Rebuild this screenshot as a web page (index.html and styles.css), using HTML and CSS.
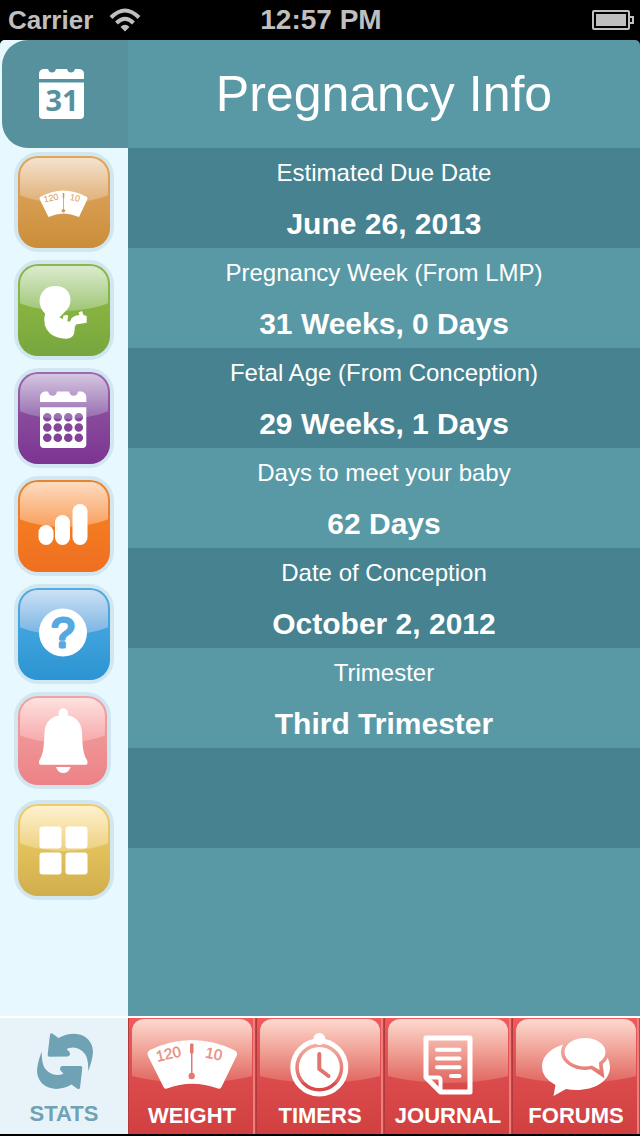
FILE: index.html
```html
<!DOCTYPE html>
<html lang="en">
<head>
  <meta charset="UTF-8">
  <meta name="viewport" content="width=device-width, initial-scale=1.0">
  <title>Pregnancy Info</title>
  <link rel="stylesheet" href="styles.css">
</head>
<body>
  <div class="status-bar">
    <div class="status-left">
      <span class="carrier">Carrier</span>
      <svg class="wifi" width="32" height="24" viewBox="0 0 32 24" fill="none" stroke="#bfbfbf" stroke-width="4">
        <path d="M2 9.500Q16 -4.500 30 9.500"/>
        <path d="M7.500 15Q16 6.500 24.500 15"/>
        <path d="M11.500 19Q16 14.500 20.500 19L16 23.500Z" fill="#bfbfbf" stroke="none"/>
      </svg>
    </div>
    <span class="clock">12:57 PM</span>
    <svg class="battery" width="42" height="20" viewBox="0 0 42 20" fill="none" stroke="#bfbfbf" stroke-width="2">
      <rect x="1" y="1" width="36" height="18" rx="1"/>
      <path d="M37 7h4v6h-4"/>
      <rect x="4" y="4" width="30" height="12" fill="#bfbfbf" stroke="none"/>
    </svg>
  </div>

  <div class="app">
    <!-- Side menu -->
    <nav class="sidebar">
      <button class="side-current" aria-label="Pregnancy info">
        <svg width="46" height="52" viewBox="0 0 46 52" fill="#fff">
          <path d="M4 1H9Q10 4.500 13 4.500T17 1H28Q29 4.500 32 4.500T36 1H41Q45 2 45 6V11H0V6Q0 2 4 1Z"/>
          <path d="M0 14.500H45V47Q45 51 41 51H4Q0 51 0 47Z"/>
          <text class="date-text" x="23" y="43" text-anchor="middle">31</text>
        </svg>
      </button>
      <button class="tile tile-weight" aria-label="Weight">
        <svg viewBox="0 0 92 92" fill="#fff">
          <path d="M22 41Q45.500 28 69 41Q70 42 69 44L61 61Q45.500 54 30.500 61L22 44Q21 42 22 41Z"/>
          <path d="M44.700 37h1.600v5h-.5v11a1.800 1.800 0 1 1-.8 0V42h-.3Z" fill="#d59a4e"/>
          <g class="dial-small" fill="#d59a4e" text-anchor="middle">
            <text x="33" y="45" transform="rotate(-12 33 42)">120</text>
            <text x="57" y="45" transform="rotate(10 57 42)">10</text>
          </g>
        </svg>
      </button>
      <button class="tile tile-baby" aria-label="Baby">
        <svg viewBox="0 0 92 92" fill="#fff">
          <path d="M37 22C47 22 52.500 28 52.500 36C52.500 44 48 46 44 51Q42 53 41.300 53.300L44.700 55L45.500 51.500L49 51Q51 52 49.700 54L49.500 57.500L52 57.500L53.700 54Q57 51 61.500 51L60.500 48.500L64 47L65.500 51L68.700 52V58.700L58 60.500Q56 63 56.500 67Q56 74 50 74.500Q40 75.500 32 69.500Q24 62 27 49.500Q21.500 44 21.500 37C22 28 28 22 37 22Z"/>
        </svg>
      </button>
      <button class="tile tile-calendar" aria-label="Calendar">
        <svg viewBox="0 0 92 92" fill="#fff">
          <mask id="days">
            <rect width="92" height="92" fill="#fff"/>
            <g stroke="#000" stroke-width="8.600" stroke-linecap="round" stroke-dasharray="0 10.500">
              <path d="M29.300 45.300H61.500"/>
              <path d="M29.300 55.500H61.500"/>
              <path d="M29.300 65.700H61.500"/>
            </g>
          </mask>
          <path d="M26 19.500H30Q31 23.700 34.700 23.700T39 19.500H51Q52 23.700 55.700 23.700T60 19.500H64Q68.300 21 68.300 25V30H22V25Q22 21 26 19.500Z"/>
          <path d="M22 35.300H68.300V72Q68.300 76 64.300 76H26Q22 76 22 72Z" mask="url(#days)"/>
        </svg>
      </button>
      <button class="tile tile-chart" aria-label="Charts">
        <svg viewBox="0 0 92 92" fill="#fff">
          <rect x="20.500" y="45" width="15" height="20" rx="7.500"/>
          <rect x="37" y="35" width="15" height="30" rx="7.500"/>
          <rect x="54.500" y="24" width="15" height="41" rx="7.500"/>
        </svg>
      </button>
      <button class="tile tile-help" aria-label="Help">
        <svg viewBox="0 0 92 92">
          <circle cx="45" cy="44.500" r="24" fill="#fff"/>
          <text class="help-text" x="45" y="59" text-anchor="middle">?</text>
        </svg>
      </button>
      <button class="tile tile-bell tile-narrow" aria-label="Reminders">
        <svg viewBox="0 0 92 92" fill="#fff">
          <circle cx="45.300" cy="17" r="4.700"/>
          <path d="M45.300 19C57 19 63.500 26 64 36C64.500 50 65 58 69 64Q70.500 68.700 68 68.700H22.500Q20 68.700 21.500 64C25.500 58 26 50 26.500 36C27 26 34 19 45.300 19Z"/>
          <path d="M38 71H52.700Q50.500 77 45.300 77T38 71Z"/>
        </svg>
      </button>
      <button class="tile tile-more" aria-label="More">
        <svg viewBox="0 0 92 92" fill="#fff">
          <rect x="21.500" y="22.500" width="22" height="22" rx="3"/>
          <rect x="47.500" y="22.500" width="22" height="22" rx="3"/>
          <rect x="21.500" y="48.500" width="22" height="22" rx="3"/>
          <rect x="47.500" y="48.500" width="22" height="22" rx="3"/>
        </svg>
      </button>
    </nav>

    <main class="content">
      <h1>Pregnancy Info</h1>
      <dl class="info-list">
        <div class="info-row">
          <dt>Estimated Due Date</dt>
          <dd>June 26, 2013</dd>
        </div>
        <div class="info-row">
          <dt>Pregnancy Week (From LMP)</dt>
          <dd>31 Weeks, 0 Days</dd>
        </div>
        <div class="info-row">
          <dt>Fetal Age (From Conception)</dt>
          <dd>29 Weeks, 1 Days</dd>
        </div>
        <div class="info-row">
          <dt>Days to meet your baby</dt>
          <dd>62 Days</dd>
        </div>
        <div class="info-row">
          <dt>Date of Conception</dt>
          <dd>October 2, 2012</dd>
        </div>
        <div class="info-row">
          <dt>Trimester</dt>
          <dd>Third Trimester</dd>
        </div>
        <div class="info-row"></div>
      </dl>
    </main>
  </div>

  <!-- Bottom tabs -->
  <nav class="tab-bar">
    <button class="tab tab-active">
      <svg viewBox="0 0 128 84" fill="#6fa2b5">
        <path id="arrow" d="M50 16.500Q51 14.500 53 16L58.500 20Q66 15.700 74 15.700C86 16 93 24 93 34Q92.500 42 88.300 53Q88.500 41 85 36Q80 29.500 73 29.500Q69 29.500 66.500 31L69.500 34Q71 37 68 38.500L49 38.700Q47.500 38.500 47.700 36.500Z"/>
        <use href="#arrow" transform="rotate(180 65 43.300)"/>
      </svg>
      <span>STATS</span>
    </button>
    <button class="tab">
      <svg viewBox="0 0 128 84" fill="#fff">
        <path d="M22 32Q63.700 12 106 32Q110.500 34.500 108.500 38L93.500 69Q92.500 71.500 90 70.500Q63.700 61 39 70.500Q36.500 71.500 35.500 69L20 38Q18.500 34 22 32Z"/>
        <g fill="#e27a70">
          <rect x="62" y="25.500" width="3.500" height="10" rx="1"/>
          <rect x="63" y="35" width="1.500" height="21"/>
          <circle cx="63.700" cy="58" r="3.200"/>
        </g>
        <g class="dial-large" fill="#e88d80" stroke="#e88d80" stroke-width=".4" text-anchor="middle">
          <text x="40.500" y="41" transform="rotate(-13 40.500 36)">120</text>
          <text x="86" y="41" transform="rotate(11 86 36)">10</text>
        </g>
      </svg>
      <span>WEIGHT</span>
    </button>
    <button class="tab">
      <svg viewBox="0 0 128 84">
        <circle cx="63.300" cy="21" r="6" fill="#fff"/>
        <circle cx="63.300" cy="49.500" r="26.500" fill="none" stroke="#fff" stroke-width="5"/>
        <circle cx="63.300" cy="49.500" r="20.500" fill="#fff"/>
        <path d="M63.300 36V51L72.500 58" fill="none" stroke="#e2746b" stroke-width="4" stroke-linecap="round" stroke-linejoin="round"/>
      </svg>
      <span>TIMERS</span>
    </button>
    <button class="tab">
      <svg viewBox="0 0 128 84" fill="none" stroke="#fff" stroke-width="5" stroke-linecap="round" stroke-linejoin="round">
        <path d="M42 20H86V74H56.500L42 59.500Z"/>
        <path d="M42 59.500H54Q56.500 59.500 56.500 62V74" stroke-width="4"/>
        <path d="M53 31.700H75.500M53 40.500H75.500M53 49.300H75.500M67 58H75.500" stroke-width="4"/>
      </svg>
      <span>JOURNAL</span>
    </button>
    <button class="tab">
      <svg viewBox="0 0 128 84" fill="#fff">
        <mask id="bubble-gap">
          <rect width="128" height="84" fill="#fff"/>
          <path d="M73 19.500C84 19.500 93.500 26 93.500 34Q93.500 40 87 44.500L88 53L80 47.500Q76.500 48.500 73 48.500C62 48.500 52.500 42 52.500 34S62 19.500 73 19.500Z" stroke="#000" stroke-width="7"/>
        </mask>
        <path d="M64 25C83 25 98 35 98 49S83 72 64 72Q59 72 54 71L41.500 78L43.500 67Q30 60 30 49C30 35 45 25 64 25Z" mask="url(#bubble-gap)"/>
        <path d="M73 20C84 20 93.500 26 93.500 34Q93.500 40 87 44.500L87.500 52L80 47.500Q76.500 48.500 73 48.500C62 48.500 52.500 42 52.500 34S62 20 73 20Z"/>
      </svg>
      <span>FORUMS</span>
    </button>
  </nav>
</body>
</html>
```
FILE: styles.css
```css
* {
  box-sizing: border-box;
}
html, body {
  margin: 0;
  padding: 0;
}
body {
  min-height: 100vh;
  display: flex;
  flex-direction: column;
  background-color: #000;
  color: #fff;
  font-family: "Liberation Sans", Arial, sans-serif;
}
button {
  border: none;
  padding: 0;
  margin: 0;
  font-family: inherit;
  cursor: pointer;
}
svg {
  display: block;
}

/* Status bar */
.status-bar {
  display: grid;
  grid-template-columns: 1fr auto 1fr;
  align-items: center;
  height: 40px;
  padding: 0 6px 0 8px;
  color: #bfbfbf;
  font-weight: bold;
}
.status-left {
  display: flex;
  align-items: center;
  gap: 16px;
}
.carrier {
  font-size: 26px;
}
.clock {
  font-size: 28px;
}
.battery {
  justify-self: end;
}

.app {
  flex: 1;
  display: flex;
  border-radius: 5px 5px 0 0;
  overflow: hidden;
  background-color: #5999a5;
}

/* Side menu */
.sidebar {
  width: 128px;
  flex-shrink: 0;
  display: flex;
  flex-direction: column;
  background-color: #e7f8ff;
}
.side-current {
  height: 108px;
  margin: 0 0 4px 2px;
  padding-left: 37px;
  background-color: #58919e;
  border-radius: 26px 0 0 26px;
}
.date-text {
  font-family: "Open Sans", "Noto Sans", sans-serif;
  font-size: 29px;
  font-weight: bold;
  fill: #58919e;
}
.tile {
  position: relative;
  width: 100px;
  height: 100px;
  margin: 0 0 8px 14px;
  border: 4px solid #d0e6f0;
  border-radius: 25px;
  background-color: #d0e6f0;
}
.tile svg {
  position: relative;
  z-index: 1;
  width: 92px;
  height: 92px;
}
/* Coloured face */
.tile::before {
  content: "";
  position: absolute;
  inset: 0;
  border-radius: 20px;
  background: linear-gradient(var(--edge), var(--middle) 50%, var(--bottom));
}
/* Glossy highlight */
.tile::after {
  content: "";
  position: absolute;
  top: 2px;
  left: 2px;
  right: 2px;
  height: 45px;
  border-radius: 18px 18px 0 0;
  background: linear-gradient(var(--shine), var(--shine-end));
  clip-path: ellipse(90% 100% at 50% 0);
}
.tile-narrow {
  width: 97px;
  height: 97px;
  margin-bottom: 11px;
}
.tile-weight {
  --edge: #e2a556;
  --middle: #d79c50;
  --bottom: #ca8d38;
  --shine: #f5e2cf;
  --shine-end: #dfaf76;
}
.tile-baby {
  --edge: #8db748;
  --middle: #86b33f;
  --bottom: #77a640;
  --shine: #dbebcf;
  --shine-end: #a0c676;
}
.tile-calendar {
  --edge: #a267ad;
  --middle: #874a9b;
  --bottom: #7c3492;
  --shine: #d5c6e1;
  --shine-end: #966cb0;
}
.tile-chart {
  --edge: #e98530;
  --middle: #f37b20;
  --bottom: #ef6f22;
  --shine: #fedbc0;
  --shine-end: #f8a05d;
}
.tile-help {
  --edge: #54abdf;
  --middle: #3fa2dc;
  --bottom: #2b94d2;
  --shine: #cce1f4;
  --shine-end: #77b4e3;
}
.tile-bell {
  --edge: #f4a0a4;
  --middle: #ef9495;
  --bottom: #ed8287;
  --shine: #fde2df;
  --shine-end: #f6a8a9;
}
.tile-more {
  --edge: #f0cc68;
  --middle: #e2c15c;
  --bottom: #d0ae4c;
  --shine: #fff1cf;
  --shine-end: #ecd07e;
}
.dial-small {
  font-size: 9px;
}
.dial-large {
  font-size: 15px;
  font-weight: normal;
}
.help-text {
  font-size: 42px;
  fill: #57a8de;
  stroke: #57a8de;
  stroke-width: 3px;
  stroke-linejoin: round;
}

/* Info rows */
.content {
  flex: 1;
  text-align: center;
}
.content h1 {
  margin: 0;
  font-size: 50px;
  font-weight: normal;
  line-height: 108px;
}
.info-list {
  margin: 0;
}
.info-row {
  height: 100px;
  line-height: 50px;
}
.info-row:nth-child(odd) {
  background-color: #46828f;
}
.info-row dt {
  font-size: 24px;
}
.info-row dd {
  margin: 0;
  font-size: 30px;
  font-weight: bold;
  line-height: 52px;
}

/* Bottom tabs */
.tab-bar {
  display: grid;
  grid-template-columns: repeat(5, minmax(0, 1fr));
  margin-bottom: 2px;
  border-top: 2px solid #fff;
}
.tab {
  position: relative;
  height: 116px;
  display: flex;
  flex-direction: column;
  align-items: center;
  box-shadow: inset 1px 0 #b23a3c, inset -1px 0 #c24345, inset -3px 0 #ee7f7c;
  background: linear-gradient(#f05a5b, #dc4c4c 50%, #d04040);
  color: #fff;
  font-size: 22px;
  font-weight: bold;
  line-height: 28px;
}
/* Glossy highlight */
.tab::before {
  content: "";
  position: absolute;
  top: 1px;
  left: 4px;
  right: 4px;
  height: 64px;
  border-radius: 12px 12px 0 0;
  background: linear-gradient(#fddad0, #f0a196 50%, #e06660);
  clip-path: ellipse(110% 100% at 50% 0);
}
.tab svg {
  position: relative;
  width: 128px;
  height: 84px;
}
.tab-active {
  background: #e8f3f9;
  box-shadow: none;
  color: #6fa2b5;
  line-height: 24px;
}
.tab-active::before {
  display: none;
}
```
